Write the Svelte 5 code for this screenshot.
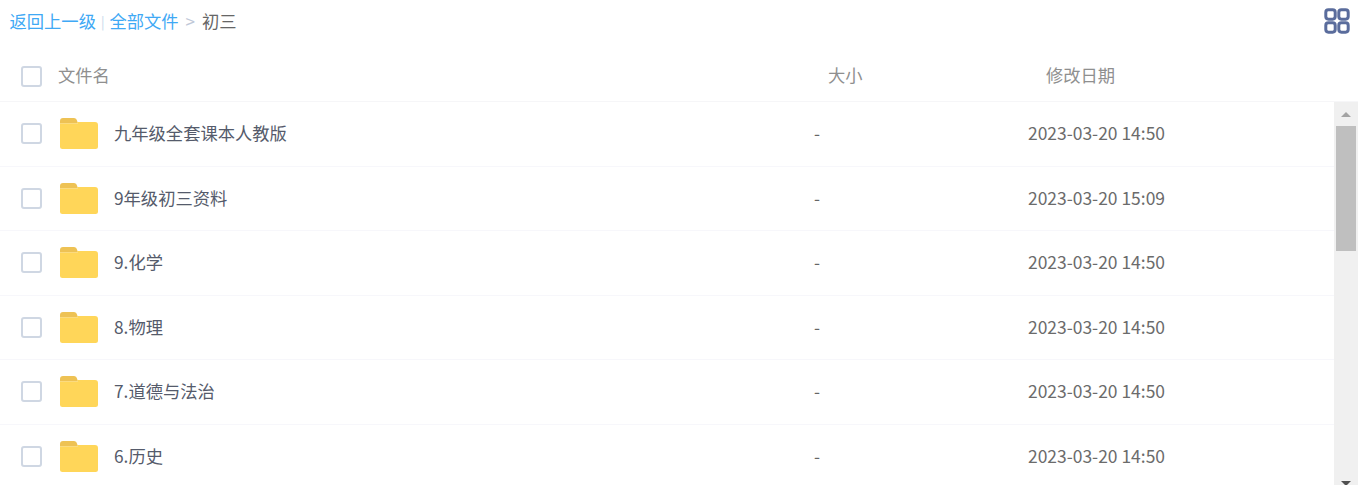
<script>
	const rows = [
		{ name: '九年级全套课本人教版', date: '2023-03-20 14:50' },
		{ name: '9年级初三资料', date: '2023-03-20 15:09' },
		{ name: '9.化学', date: '2023-03-20 14:50' },
		{ name: '8.物理', date: '2023-03-20 14:50' },
		{ name: '7.道德与法治', date: '2023-03-20 14:50' },
		{ name: '6.历史', date: '2023-03-20 14:50' }
	]
</script>

<div class="page">
	<div class="crumbs">
		<a href="#back">返回上一级</a>
		<span class="sep">|</span>
		<a href="#all">全部文件</a>
		<span class="gt">&gt;</span>
		<span class="current">初三</span>
		<svg class="grid-icon" width="26" height="26" viewBox="0 0 26 26" fill="none" stroke="#5a6c9c" stroke-width="3">
			<rect x="1.800" y="1.800" width="9.400" height="9.400" rx="2.600" />
			<rect x="14.800" y="1.800" width="9.400" height="9.400" rx="2.600" />
			<rect x="1.800" y="14.800" width="9.400" height="9.400" rx="2.600" />
			<rect x="14.800" y="14.800" width="9.400" height="9.400" rx="2.600" />
		</svg>
	</div>

	<div class="head">
		<span class="check"></span>
		<span class="h-name">文件名</span>
		<span class="h-size">大小</span>
		<span class="h-date">修改日期</span>
	</div>

	<div class="body">
		<div class="list">
			{#each rows as row}
				<div class="row">
					<span class="check"></span>
					<svg class="folder" width="38" height="31" viewBox="0 0 38 31">
						<path d="M0 3a3 3 0 0 1 3-3h11a3 3 0 0 1 3 2.500l1 3H0z" fill="#eec254" />
						<path d="M0 5.500h18l-1-1.500h18a3 3 0 0 1 3 3v21.500a2.500 2.500 0 0 1-2.500 2.500h-33A2.500 2.500 0 0 1 0 28.500z" fill="#ffd659" />
					</svg>
					<span class="name">{row.name}</span>
					<span class="size">-</span>
					<span class="date">{row.date}</span>
				</div>
			{/each}
		</div>
		<div class="scrollbar">
			<span class="arrow up"></span>
			<span class="thumb"></span>
			<span class="arrow down"></span>
		</div>
	</div>
</div>

<style>
:global(body) {
	margin: 0;
	background: #fff;
}
.page {
	width: 1358px;
	height: 485px;
	overflow: hidden;
	font-family: "Noto Sans CJK SC", "Noto Sans", sans-serif;
	font-size: 17.3px;
	color: #666;
}
.crumbs {
	height: 42px;
	display: flex;
	align-items: center;
	padding-left: 9.500px;
	padding-right: 8px;
	line-height: 1;
}
.crumbs a, .crumbs .current, .crumbs .gt {
	padding-bottom: 1px;
}
.crumbs a {
	color: #3fa9f5;
	text-decoration: none;
}
.sep {
	margin: 0 5px;
	font-size: 13px;
	color: #c4d7ea;
}
.gt {
	margin: 0 7px;
	color: #c0c8d8;
	font-size: 17px;
}
.current {
	color: #666;
}
.grid-icon {
	margin-left: auto;
}
.head {
	height: 60px;
	display: flex;
	align-items: center;
	padding-left: 21px;
	padding-top: 8px;
	box-sizing: border-box;
	color: #8f8f8f;
	border-bottom: 1px solid #f6f6f8;
}
.head .check {
	margin-top: 2px;
}
.h-name, .h-size, .h-date {
	padding-bottom: 2px;
}
.h-name {
	margin-left: 16px;
	width: 770px;
}
.h-size {
	width: 218px;
}
.check {
	display: block;
	box-sizing: border-box;
	width: 21px;
	height: 21px;
	flex: none;
	border: 2px solid #cfd7e3;
	border-radius: 3px;
	background: #fff;
}
.body {
	display: flex;
	height: 383px;
}
.list {
	flex: 1;
}
.row {
	height: 64.5px;
	box-sizing: border-box;
	display: flex;
	align-items: center;
	padding-left: 21px;
	border-bottom: 1px solid #f7f7fb;
}
.folder {
	margin-left: 18px;
	flex: none;
}
.name, .size, .date {
	padding-bottom: 2px;
}
.name {
	margin-left: 16px;
	width: 700px;
	color: #555b6b;
}
.size {
	width: 214px;
	color: #666;
}
.date {
	color: #6b6b6b;
	font-size: 17.45px;
}
.scrollbar {
	width: 24px;
	flex: none;
	background: #f0f0f0;
	position: relative;
}
.thumb {
	position: absolute;
	top: 24px;
	left: 2px;
	width: 20px;
	height: 125px;
	background: #bfbfbf;
}
.arrow {
	position: absolute;
	left: 7px;
	width: 0;
	height: 0;
	border-left: 5.500px solid transparent;
	border-right: 5.500px solid transparent;
}
.up {
	top: 10px;
	border-bottom: 5px solid #a3a3a3;
}
.down {
	top: 379px;
	border-top: 5px solid #505050;
}
</style>
